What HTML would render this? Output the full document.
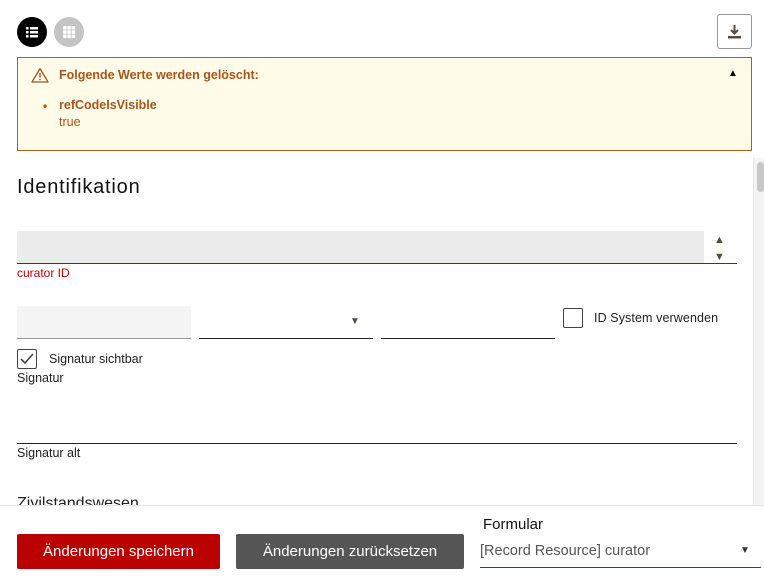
<!DOCTYPE html>
<html><head><style>
*{box-sizing:border-box;margin:0;padding:0}
body{width:764px;height:579px;overflow:hidden;background:#fff;font-family:"Liberation Sans",sans-serif;color:#222;position:relative}
.a{position:absolute}
</style></head><body>
<div class="a" style="left:17px;top:17px;width:30px;height:30px;border-radius:50%;background:#000">
<svg width="30" height="30" viewBox="0 0 30 30"><g fill="#fff"><rect x="9" y="10" width="2.5" height="2.5"/><rect x="13" y="10" width="8" height="2.5"/><rect x="9" y="14" width="2.5" height="2.5"/><rect x="13" y="14" width="8" height="2.5"/><rect x="9" y="18" width="2.5" height="2.5"/><rect x="13" y="18" width="8" height="2.5"/></g></svg></div>
<div class="a" style="left:54px;top:17px;width:30px;height:30px;border-radius:50%;background:#c4c4c4">
<svg width="30" height="30" viewBox="0 0 30 30"><g fill="#fff"><rect x="9" y="9" width="3.5" height="3.5"/><rect x="13.3" y="9" width="3.5" height="3.5"/><rect x="17.6" y="9" width="3.5" height="3.5"/><rect x="9" y="13.3" width="3.5" height="3.5"/><rect x="13.3" y="13.3" width="3.5" height="3.5"/><rect x="17.6" y="13.3" width="3.5" height="3.5"/><rect x="9" y="17.6" width="3.5" height="3.5"/><rect x="13.3" y="17.6" width="3.5" height="3.5"/><rect x="17.6" y="17.6" width="3.5" height="3.5"/></g></svg></div>
<div class="a" style="left:717px;top:14px;width:35px;height:35px;border:1px solid #999;border-radius:3px">
<svg width="33" height="33" viewBox="0 0 33 33"><path d="M16.5 10v8M13 15l3.5 3.5L20 15" stroke="#5a4a3c" stroke-width="2" fill="none"/><rect x="10" y="21" width="13" height="2.5" fill="#5a4a3c"/></svg></div>
<div class="a" style="left:17px;top:57px;width:735px;height:94px;background:#fefbe8;border:1px solid #b0601a;color:#a8561a">
<svg class="a" style="left:13px;top:9px" width="18" height="16" viewBox="0 0 18 16"><path d="M9 1.5L17 15H1z" fill="none" stroke="#a8561a" stroke-width="1.3" stroke-linejoin="round"/><path d="M9 6v4.5" stroke="#a8561a" stroke-width="1.4"/><circle cx="9" cy="12.5" r=".8" fill="#a8561a"/></svg>
<div class="a" style="left:41px;top:10px;font-size:12.5px;font-weight:bold">Folgende Werte werden gelöscht:</div>
<div class="a" style="left:710px;top:10px;color:#000;font-size:10px">▲</div>
<div class="a" style="left:25px;top:41px;font-size:12px;font-weight:bold">•</div>
<div class="a" style="left:41px;top:40px;font-size:12.5px;font-weight:bold">refCodeIsVisible</div>
<div class="a" style="left:41px;top:57px;font-size:12.5px">true</div>
</div>
<div class="a" style="left:753px;top:158px;width:11px;height:348px;background:#f4f4f4;border-left:1px solid #e6e6e6"></div>
<div class="a" style="left:757px;top:162px;width:7px;height:30px;background:#c8c8c8;border-radius:4px"></div>
<div class="a" style="left:17px;top:176px;font-size:20px;letter-spacing:0.8px;color:#111">Identifikation</div>
<div class="a" style="left:17px;top:231px;width:687px;height:32px;background:#ececec"></div>
<div class="a" style="left:17px;top:263px;width:720px;height:1px;background:#b00"></div>
<div class="a" style="left:714px;top:232px;font-size:11px;color:#5a4a3c;line-height:17px">▲<br>▼</div>
<div class="a" style="left:17px;top:266px;font-size:12px;color:#b00">curator ID</div>
<div class="a" style="left:17px;top:306px;width:174px;height:33px;background:#f4f4f4;border-bottom:1px solid #999"></div>
<div class="a" style="left:199px;top:338px;width:174px;height:1px;background:#222"></div>
<div class="a" style="left:350px;top:316px;font-size:10px;color:#5a4a3c">▼</div>
<div class="a" style="left:381px;top:338px;width:174px;height:1px;background:#222"></div>
<div class="a" style="left:563px;top:308px;width:20px;height:20px;border:1px solid #444;border-radius:2px"></div>
<div class="a" style="left:594px;top:311px;font-size:12.5px;letter-spacing:0.1px">ID System verwenden</div>
<div class="a" style="left:17px;top:349px;width:20px;height:20px;border:1px solid #444;border-radius:2px"><svg width="18" height="18" viewBox="0 0 18 18"><path d="M3 9l4 4 8-9" stroke="#444" stroke-width="1.6" fill="none"/></svg></div>
<div class="a" style="left:49px;top:352px;font-size:12.5px">Signatur sichtbar</div>
<div class="a" style="left:17px;top:371px;font-size:12.5px">Signatur</div>
<div class="a" style="left:17px;top:443px;width:720px;height:1px;background:#222"></div>
<div class="a" style="left:17px;top:446px;font-size:12.5px">Signatur alt</div>
<div class="a" style="left:17px;top:493px;font-size:16px;height:13px;overflow:hidden;line-height:22px">Zivilstandswesen</div>
<div class="a" style="left:0;top:505px;width:764px;height:74px;background:#fff;border-top:1px solid #e6e6e6"></div>
<div class="a" style="left:17px;top:534px;width:203px;height:35px;background:#bb0000;border-radius:2px;color:#fff;font-size:15px;text-align:center;line-height:35px">Änderungen speichern</div>
<div class="a" style="left:236px;top:534px;width:228px;height:35px;background:#555;border-radius:2px;color:#fff;font-size:15px;text-align:center;line-height:35px">Änderungen zurücksetzen</div>
<div class="a" style="left:483px;top:516px;font-size:15px;color:#111">Formular</div>
<div class="a" style="left:480px;top:543px;font-size:14.5px;color:#555">[Record Resource] curator</div>
<div class="a" style="left:740px;top:545px;font-size:10px;color:#333">▼</div>
<div class="a" style="left:480px;top:567px;width:281px;height:1px;background:#d00"></div>
</body></html>
